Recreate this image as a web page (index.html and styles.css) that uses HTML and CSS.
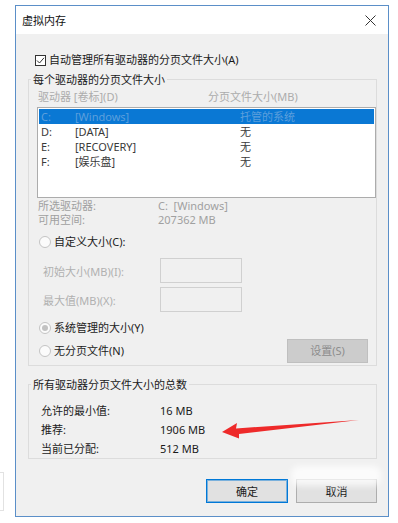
FILE: index.html
```html
<!DOCTYPE html>
<html lang="zh-CN">
<head>
    <meta charset="UTF-8">
    <meta name="viewport" content="width=device-width, initial-scale=1.0">
    <title>虚拟内存</title>
    <link rel="stylesheet" href="styles.css">
</head>
<body>
    <div class="edge-tab"></div>

    <div class="dialog">
        <!-- Barre de titre -->
        <div class="titlebar">
            <span class="title">虚拟内存</span>
            <svg class="close" width="11" height="11" viewBox="0 0 11 11">
                <path d="M0.5 0.5 L10.5 10.5 M10.5 0.5 L0.5 10.5" stroke="#333" stroke-width="1" fill="none"/>
            </svg>
        </div>

        <div class="content">
            <div class="check-row">
                <span class="checkbox">
                    <svg width="9" height="9" viewBox="0 0 9 9">
                        <path d="M1 4.5 L3.5 7 L8 1.8" stroke="#333" stroke-width="1" fill="none"/>
                    </svg>
                </span>
                自动管理所有驱动器的分页文件大小(A)
            </div>

            <fieldset class="group group-drives">
                <legend>每个驱动器的分页文件大小</legend>
                <div class="list-head">
                    <span>驱动器 [卷标](D)</span>
                    <span>分页文件大小(MB)</span>
                </div>
                <div class="listbox">
                    <div class="list-row selected"><span>C:</span><span>[Windows]</span><span>托管的系统</span></div>
                    <div class="list-row"><span>D:</span><span>[DATA]</span><span>无</span></div>
                    <div class="list-row"><span>E:</span><span>[RECOVERY]</span><span>无</span></div>
                    <div class="list-row"><span>F:</span><span>[娱乐盘]</span><span>无</span></div>
                </div>
                <div class="info-row first"><span>所选驱动器:</span><span>C:&nbsp; [Windows]</span></div>
                <div class="info-row"><span>可用空间:</span><span>207362 MB</span></div>

                <div class="radio-row custom"><span class="radio"></span>自定义大小(C):</div>
                <div class="field-row first"><span class="field-label">初始大小(MB)(I):</span><span class="input"></span></div>
                <div class="field-row"><span class="field-label">最大值(MB)(X):</span><span class="input"></span></div>
                <div class="radio-row system"><span class="radio checked"></span>系统管理的大小(Y)</div>
                <div class="radio-row nofile">
                    <span class="radio"></span>无分页文件(N)
                    <button class="btn-set">设置(S)</button>
                </div>
            </fieldset>

            <fieldset class="group group-total">
                <legend>所有驱动器分页文件大小的总数</legend>
                <div class="total-row"><span>允许的最小值:</span><span>16 MB</span></div>
                <div class="total-row"><span>推荐:</span><span>1906 MB</span></div>
                <div class="total-row"><span>当前已分配:</span><span>512 MB</span></div>
            </fieldset>

            <div class="actions">
                <button class="btn btn-ok">确定</button>
                <button class="btn">取消</button>
            </div>
        </div>

        <!-- Flèche rouge d'annotation -->
        <svg class="arrow" width="150" height="24" viewBox="220 418 150 24">
            <polygon points="222,432 237,423 236,428.5 359,420 239,434 239,438.5" fill="#ee2a2a"/>
        </svg>

        <!-- Filigrane -->
        <div class="watermark"></div>
    </div>
</body>
</html>
```

FILE: styles.css
```css
* {
    margin: 0;
    padding: 0;
    box-sizing: border-box;
}

body {
    font-family: "Noto Sans", "Noto Sans CJK SC", sans-serif;
    font-size: 11px;
    color: #1e1e1e;
    background: #fff;
    width: 398px;
    height: 523px;
    overflow: hidden;
    position: relative;
}

.edge-tab {
    position: absolute;
    left: 0;
    top: 472px;
    width: 4px;
    height: 39px;
    border: 1px solid #e2e2e2;
    border-left: none;
}

.dialog {
    position: relative;
    width: 374px;
    height: 512px;
    margin: 5px 0 0 15px;
    border: 1px solid #5b8fc8;
    background: #f0f0f0;
}

.titlebar {
    height: 28px;
    background: #fff;
    display: flex;
    align-items: center;
    justify-content: space-between;
    padding: 0 12px 0 6px;
}

.title {
    line-height: 15px;
    color: #111;
}

.close {
    display: block;
    margin-top: 1px;
}

.content {
    padding: 0 11px 0 12px;
}

.check-row {
    display: flex;
    align-items: center;
    height: 16px;
    margin: 18px 0 0 7px;
    line-height: 16px;
    color: #1a1a1a;
}

.checkbox {
    width: 11px;
    height: 11px;
    border: 1px solid #333;
    background: #fff;
    display: flex;
    align-items: center;
    justify-content: center;
    margin-right: 3px;
}

.checkbox svg {
    display: block;
}

/* Cadres de groupe */
.group {
    border: 1px solid #dcdcdc;
    padding: 0;
    margin-top: 4px;
}

.group legend {
    margin-left: 2px;
    padding: 0 2px;
    line-height: 15px;
    color: #1a1a1a;
}

.group-drives {
    padding-bottom: 2px;
}

.list-head {
    display: grid;
    grid-template-columns: 170px 1fr;
    padding: 2px 0 0 9px;
    height: 17px;
    line-height: 15px;
    color: #acacac;
}

.listbox {
    margin: 3px 0 0 8px;
    height: 91px;
    border: 1px solid #acacac;
    background: #fff;
    padding: 1px;
}

.list-row {
    display: grid;
    grid-template-columns: 34px 165px 1fr;
    height: 15px;
    line-height: 15px;
    padding-left: 2px;
    color: #3a3a3a;
}

.list-row.selected {
    background: #0a78d4;
    color: #5c9fdc;
}

.info-row {
    display: grid;
    grid-template-columns: 120px 1fr;
    height: 14px;
    line-height: 14px;
    padding-left: 9px;
    color: #a0a0a0;
}

.info-row.first {
    margin-top: 1px;
}

.radio-row {
    display: flex;
    align-items: center;
    height: 16px;
    line-height: 16px;
    padding-left: 10px;
    color: #222;
}

.radio-row.custom {
    margin-top: 7px;
}

.radio-row.system {
    margin-top: 8px;
}

.radio-row.nofile {
    height: 24px;
    margin-top: 3px;
}

.radio {
    width: 12px;
    height: 12px;
    border: 1px solid #c4c4c4;
    border-radius: 50%;
    background: #fbfbfb;
    margin-right: 3px;
    display: flex;
    align-items: center;
    justify-content: center;
}

.radio.checked::after {
    content: "";
    width: 6px;
    height: 6px;
    border-radius: 50%;
    background: #c2c2c2;
}

.field-row {
    display: flex;
    align-items: center;
    height: 25px;
    padding-left: 14px;
    margin-top: 4px;
    color: #b0b0b0;
}

.field-row.first {
    margin-top: 8px;
}

.field-label {
    width: 117px;
}

.input {
    width: 82px;
    height: 25px;
    border: 1px solid #d0d0d0;
    background: #f0f0f0;
}

.btn-set {
    margin-left: auto;
    margin-right: 8px;
    width: 81px;
    height: 24px;
    font: inherit;
    color: #8c8c8c;
    background: #cccccc;
    border: 1px solid #bfbfbf;
}

.group-total {
    margin-top: 11px;
}

.total-row {
    display: grid;
    grid-template-columns: 119px 1fr;
    height: 19px;
    line-height: 19px;
    padding-left: 12px;
    color: #1a1a1a;
}

.group-total legend + .total-row {
    margin-top: 9px;
}

.actions {
    display: flex;
    justify-content: flex-end;
    gap: 8px;
    margin-top: 20px;
}

.btn {
    width: 81px;
    height: 24px;
    font: inherit;
    color: #1a1a1a;
    background: #e1e1e1;
    border: 1px solid #adadad;
}

.btn-ok {
    width: 82px;
    border-color: #0078d7;
    box-shadow: inset 0 0 0 1px rgba(0, 120, 215, 0.45);
}

.arrow {
    position: absolute;
    left: 204px;
    top: 412px;
}

.watermark {
    position: absolute;
    left: 275px;
    top: 460px;
    width: 90px;
    height: 20px;
    border-radius: 8px;
    background: rgba(255, 255, 255, 0.75);
    filter: blur(3px);
}
```
